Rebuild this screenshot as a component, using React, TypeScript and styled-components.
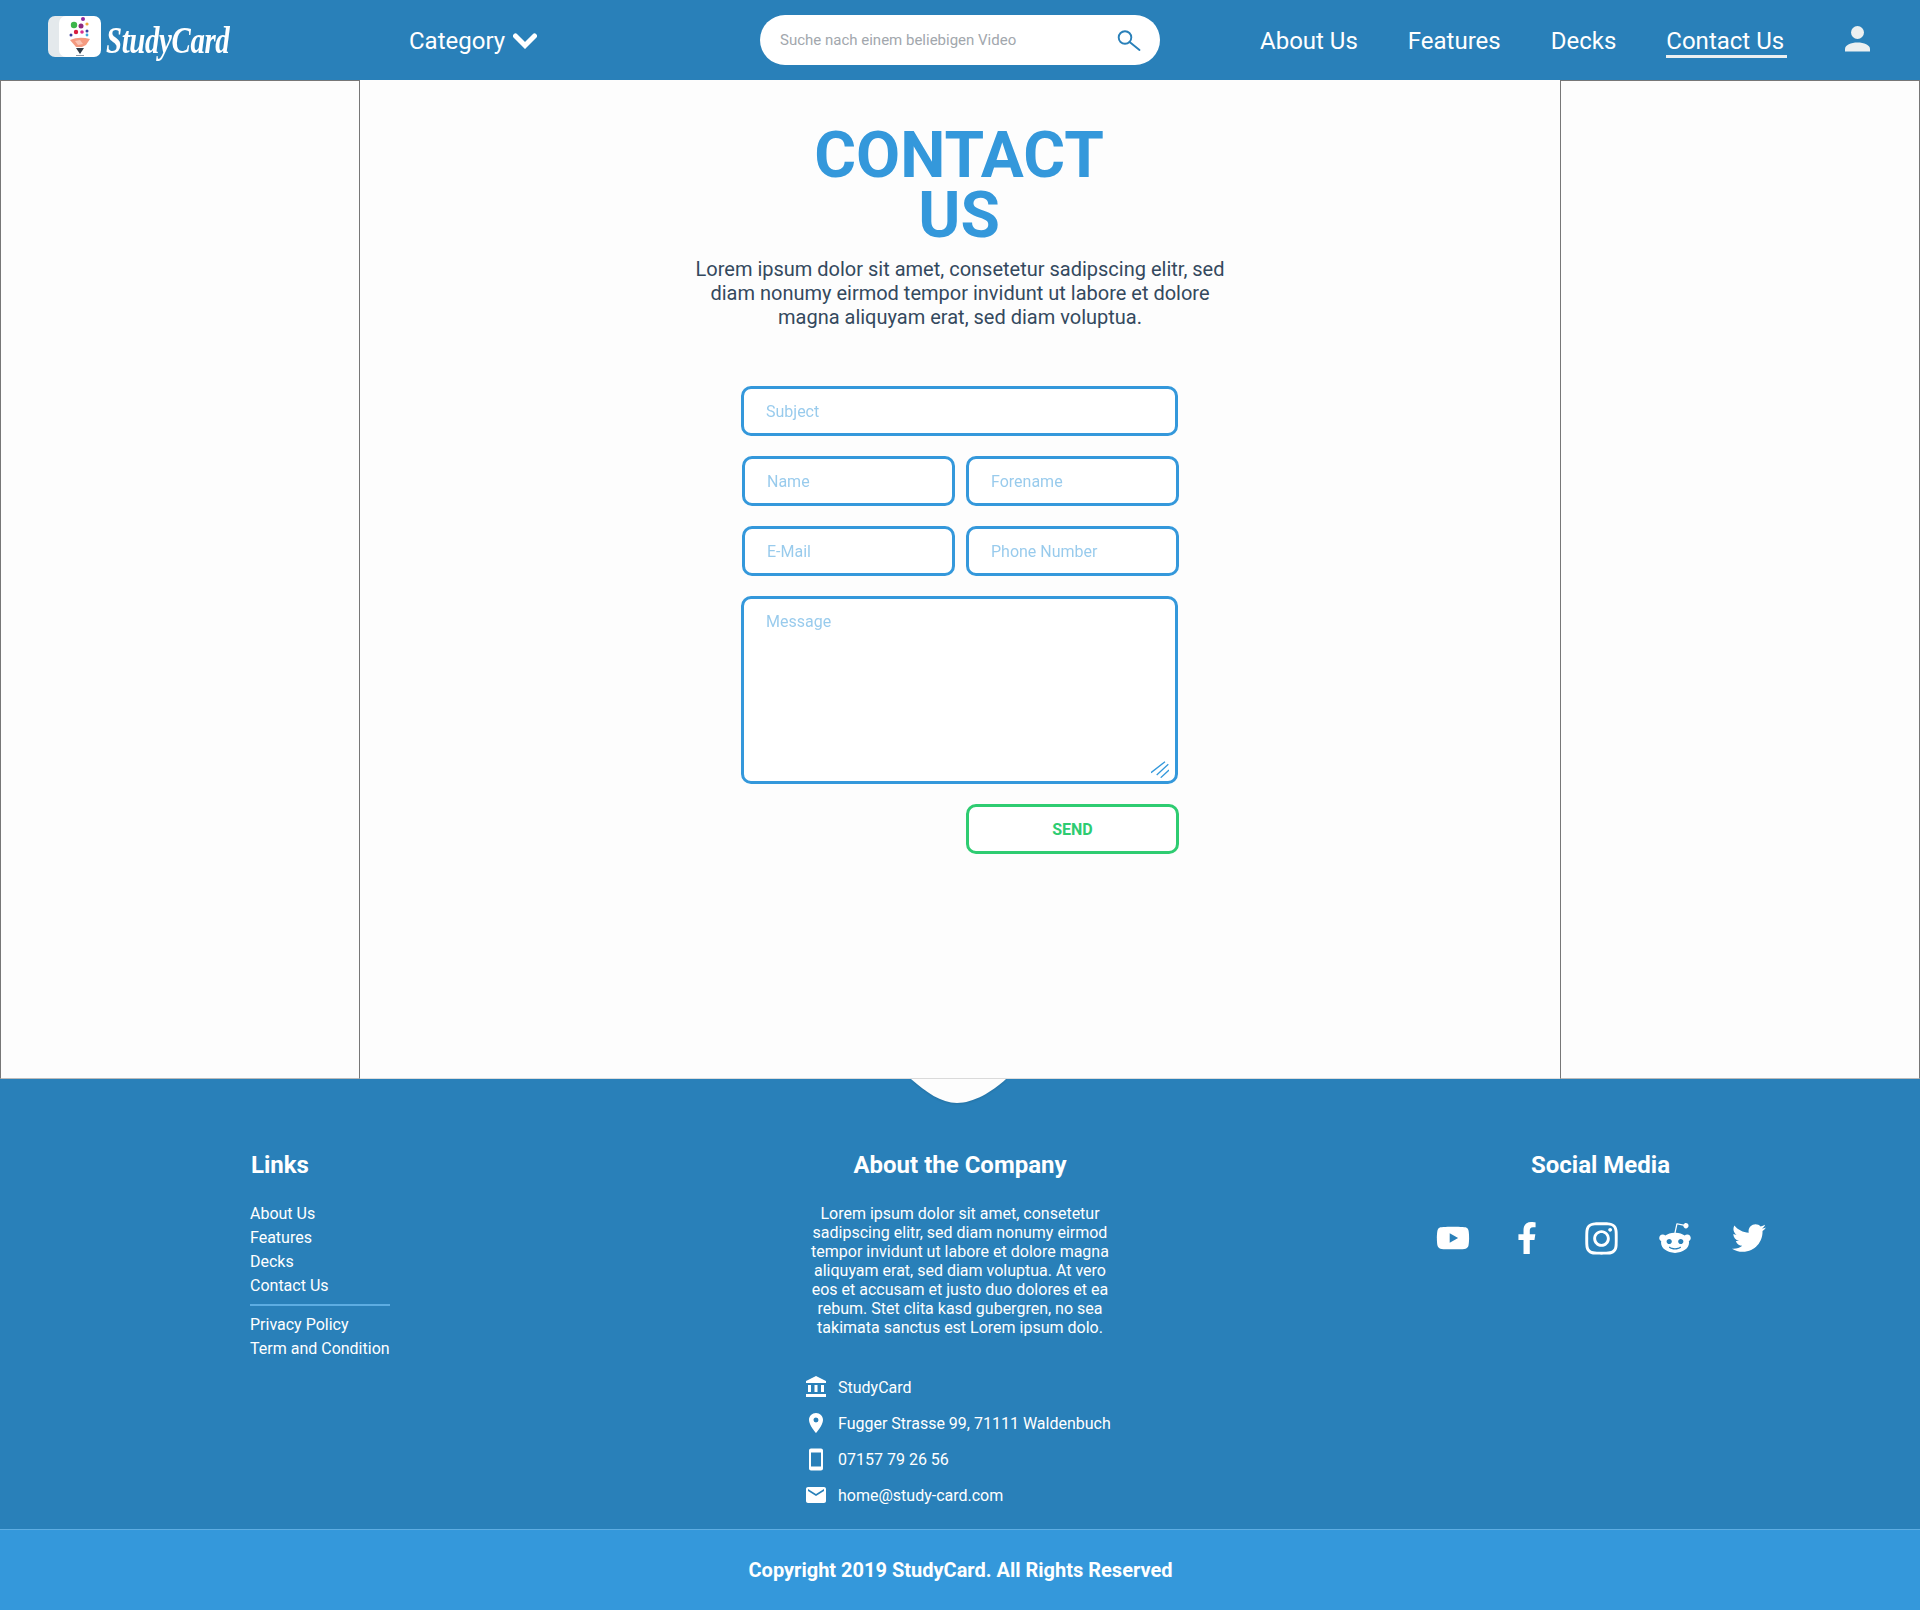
import React from 'react'
import styled, { createGlobalStyle } from 'styled-components'
import { FaFacebookF, FaInstagram, FaRedditAlien, FaTwitter, FaYoutube } from 'react-icons/fa'
import { MdAccountBalance, MdEmail, MdLocationOn, MdSmartphone } from 'react-icons/md'

const GlobalStyle = createGlobalStyle`
  * { box-sizing: border-box; }
  html, body { margin: 0; padding: 0; background: #fdfdfd; }
  body { font-family: Roboto, "Liberation Sans", sans-serif; }
`

const Page = styled.div`
  width: 1920px;
  height: 1610px;
  display: flex;
  flex-direction: column;
  overflow: hidden;
`

const Header = styled.header`
  height: 80px;
  flex: none;
  display: flex;
  align-items: center;
  background: #2980b9;
  color: #fff;
`

const LogoLink = styled.a`
  width: 361px;
  padding-left: 47px;
  display: flex;
  align-items: center;
  gap: 5px;
  flex: none;
`

const LogoMarkSvg = styled.svg`
  flex: none;
  margin-bottom: 6px;
`

const LogoText = styled.span`
  font-family: "Liberation Serif", serif;
  font-style: italic;
  font-weight: 700;
  font-size: 38px;
  letter-spacing: -0.5px;
  line-height: 46px;
  color: #fff;
  display: inline-block;
  transform: scaleX(0.76);
  transform-origin: left center;
`

const CategoryButton = styled.div`
  width: 399px;
  padding-left: 48px;
  padding-top: 2px;
  display: flex;
  align-items: center;
  gap: 8px;
  font-size: 24px;
  flex: none;
`

const SearchBox = styled.div`
  width: 400px;
  height: 50px;
  flex: none;
  background: #fff;
  border-radius: 25px;
  display: flex;
  align-items: center;
  padding: 0 19px 0 20px;
  color: #2980b9;
`

const SearchInput = styled.input`
  flex: 1;
  border: 0;
  outline: 0;
  background: none;
  padding: 0;
  font: 15px Roboto, sans-serif;
  &::placeholder { color: #a2a7ad; opacity: 1; }
`

const Nav = styled.nav`
  margin-left: 100px;
  display: flex;
  align-items: center;
  gap: 50px;
  font-size: 24px;
`

const NavLink = styled.a<{ $active?: boolean }>`
  display: block;
  line-height: 28px;
  padding: 2px ${(p) => (p.$active ? '3px' : '0')} ${(p) => (p.$active ? '0' : '3px')} 0;
  margin-top: 2px;
  border-bottom: ${(p) => (p.$active ? '3px solid #ecf0f1' : '0')};
  color: #fff;
`

const UserIcon = styled.div`
  margin-left: 58px;
  display: flex;
  color: #ecf0f1;
  margin-top: -2px;
`

const Main = styled.main`
  height: 999px;
  flex: none;
  display: grid;
  grid-template-columns: 360px 1200px 360px;
`

const SideColumn = styled.div`
  border: 1px solid #777;
  border-bottom-color: #bbb;
`

const Center = styled.section`
  display: flex;
  flex-direction: column;
  align-items: center;
  padding-top: 46px;
  border-bottom: 1px solid #ddd;
`

const Title = styled.h1`
  margin: 0 2px 0 0;
  width: 320px;
  text-align: center;
  font-size: 64px;
  line-height: 60px;
  font-weight: 700;
  color: #3498db;
`

const Lead = styled.p`
  margin: 11px 0 0;
  width: 540px;
  text-align: center;
  font-size: 20px;
  line-height: 24px;
  color: #34495e;
`

const Form = styled.form`
  margin-top: 57px;
  width: 440px;
  display: grid;
  grid-template-columns: 213px 213px;
  column-gap: 11px;
  row-gap: 20px;
  padding-left: 2px;
`

const Field = styled.input<{ $wide?: boolean }>`
  height: 50px;
  width: ${(p) => (p.$wide ? '437px' : '213px')};
  grid-column: ${(p) => (p.$wide ? '1 / 3' : 'auto')};
  margin-left: ${(p) => (p.$wide ? '-1px' : '0')};
  border: 3px solid #3498db;
  border-radius: 10px;
  padding: 0 22px;
  background: #fff;
  outline: 0;
  font: 16px Roboto, sans-serif;
  color: #2c3e50;
  &::placeholder { color: #3498db; opacity: 0.5; }
`

const MessageWrap = styled.div`
  grid-column: 1 / 3;
  position: relative;
  height: 188px;
  width: 437px;
  margin-left: -1px;
`

const MessageArea = styled.textarea`
  height: 100%;
  width: 100%;
  display: block;
  resize: none;
  border: 3px solid #3498db;
  border-radius: 10px;
  padding: 13px 22px;
  background: #fff;
  outline: 0;
  font: 16px Roboto, sans-serif;
  &::placeholder { color: #3498db; opacity: 0.5; }
`

const ResizeGrip = styled.svg`
  position: absolute;
  right: 9px;
  bottom: 6px;
`

const SendButton = styled.button`
  grid-column: 2;
  height: 50px;
  border: 3px solid #2ecc71;
  border-radius: 10px;
  background: #fff;
  color: #2ecc71;
  font: 700 16px Roboto, sans-serif;
  text-transform: uppercase;
`

const Footer = styled.footer`
  position: relative;
  height: 450px;
  flex: none;
  background: #2980b9;
  color: #fff;
  display: grid;
  grid-template-columns: 560px 300px 675px;
  padding: 71px 0 0 250px;
`

const Notch = styled.svg`
  position: absolute;
  left: 908px;
  top: 0;
  filter: drop-shadow(0 1px 1px rgba(0, 0, 0, 0.12));
`

const FooterColumn = styled.div<{ $center?: boolean }>`
  text-align: ${(p) => (p.$center ? 'center' : 'left')};
`

const FooterTitle = styled.h3<{ $center?: boolean }>`
  margin: 0 0 0 ${(p) => (p.$center ? '0' : '1px')};
  font-size: 24px;
  line-height: 30px;
  font-weight: 700;
  white-space: nowrap;
  text-align: ${(p) => (p.$center ? 'center' : 'left')};
`

const SocialTitle = styled(FooterTitle)`
  margin-left: -1px;
`

const LinkList = styled.ul`
  list-style: none;
  margin: 22px 0 0;
  padding: 0;
  width: 140px;
  font-size: 16px;
  line-height: 24px;
  white-space: nowrap;
`

const LinkDivider = styled.hr`
  margin: 6px 0 7px;
  width: 140px;
  height: 2px;
  border: 0;
  background: #5dade2;
`

const AboutText = styled.p`
  margin: 24px 0 0;
  font-size: 16px;
  line-height: 19px;
`

const ContactList = styled.div`
  margin-top: 38px;
  margin-left: -6px;
  display: flex;
  flex-direction: column;
  gap: 12px;
  white-space: nowrap;
`

const ContactRow = styled.div`
  display: flex;
  align-items: center;
  gap: 10px;
  height: 24px;
  font-size: 16px;
  text-align: left;
`

const ContactIcon = styled.span`
  width: 24px;
  display: flex;
  justify-content: center;
`

const SocialColumn = styled.div`
  padding-left: 306px;
  width: 676px;
`

const SocialRow = styled.div`
  margin-top: 39px;
  display: flex;
  justify-content: center;
`

const SocialIcon = styled.a`
  width: 74.5px;
  height: 38px;
  display: flex;
  align-items: center;
  justify-content: center;
  color: #fff;
`

const Copyright = styled.div`
  height: 81px;
  flex: none;
  background: #3498db;
  border-top: 1px solid #5dade2;
  color: #fff;
  font-size: 20px;
  font-weight: 700;
  padding-left: 1px;
  display: flex;
  align-items: center;
  justify-content: center;
`

function LogoMark() {
  return (
    <LogoMarkSvg width="54" height="42" viewBox="0 0 54 42">
      <rect x="1" y="0" width="44" height="41" rx="7" fill="#e4e9ec" />
      <rect x="12" y="0" width="42" height="41" rx="7" fill="#fff" />
      <circle cx="27" cy="9" r="3.2" fill="#3cb54a" />
      <circle cx="36" cy="3" r="2" fill="#8e2a9f" />
      <circle cx="34" cy="10" r="2.5" fill="#8e2a7f" />
      <circle cx="40" cy="8" r="1.6" fill="#f2a93b" />
      <circle cx="40" cy="15" r="1.5" fill="#3c3f9f" />
      <circle cx="29" cy="16" r="2.2" fill="#d81e3f" />
      <circle cx="35" cy="16" r="1.8" fill="#d8308f" />
      <circle cx="24" cy="19" r="1.5" fill="#3c3f9f" />
      <circle cx="40" cy="19" r="1.4" fill="#3aa8e0" />
      <path d="M23 24 Q32 20 43 23 L39 29 L35 31 L29 31 Z" fill="#f49a80" />
      <path d="M28 25 L33 24 L36 28 L31 29 Z" fill="#fbc4b4" />
      <path d="M29 32 H37 L33 38 Z" fill="#2f3b48" />
      <rect x="29" y="39" width="8" height="1" fill="#8b98a5" />
    </LogoMarkSvg>
  )
}

function ChevronIcon() {
  return (
    <svg width="24" height="16" viewBox="0 0 24 16">
      <path d="M2.5 3 L12 12.5 L21.5 3" fill="none" stroke="#fff" strokeWidth="5" strokeLinecap="round" strokeLinejoin="miter" />
    </svg>
  )
}

function SearchIcon() {
  return (
    <svg width="24" height="24" viewBox="0 0 24 24" fill="none" stroke="currentColor" strokeWidth="1.9" strokeLinecap="round">
      <circle cx="8" cy="9.5" r="6.3" />
      <path d="M12.6 14 L22.5 22" />
    </svg>
  )
}

function PersonIcon() {
  return (
    <svg width="25" height="26" viewBox="0 0 25 26" fill="currentColor">
      <circle cx="12.5" cy="6.5" r="6.5" />
      <path d="M0 25.5 V23 C0 19 6 16.5 12.5 16.5 S25 19 25 23 V25.5 Z" />
    </svg>
  )
}

export default function App() {
  return (
    <Page>
      <GlobalStyle />
      <Header>
        <LogoLink>
          <LogoMark />
          <LogoText>StudyCard</LogoText>
        </LogoLink>
        <CategoryButton>
          Category <ChevronIcon />
        </CategoryButton>
        <SearchBox>
          <SearchInput placeholder="Suche nach einem beliebigen Video" />
          <SearchIcon />
        </SearchBox>
        <Nav>
          <NavLink>About Us</NavLink>
          <NavLink>Features</NavLink>
          <NavLink>Decks</NavLink>
          <NavLink $active>Contact Us</NavLink>
        </Nav>
        <UserIcon>
          <PersonIcon />
        </UserIcon>
      </Header>
      <Main>
        <SideColumn />
        <Center>
          <Title>CONTACT US</Title>
          <Lead>
            Lorem ipsum dolor sit amet, consetetur sadipscing elitr, sed diam nonumy eirmod tempor invidunt ut labore et
            dolore magna aliquyam erat, sed diam voluptua.
          </Lead>
          <Form>
            <Field $wide placeholder="Subject" />
            <Field placeholder="Name" />
            <Field placeholder="Forename" />
            <Field placeholder="E-Mail" />
            <Field placeholder="Phone Number" />
            <MessageWrap>
              <MessageArea placeholder="Message" />
              <ResizeGrip width="18" height="17" viewBox="0 0 18 17">
                <path d="M0 11.7 L14 .7 M5.7 14 L17.3 3.3 M9.7 16.7 L18 9" stroke="#3498db" strokeWidth="1.3" fill="none" />
              </ResizeGrip>
            </MessageWrap>
            <SendButton type="button">Send</SendButton>
          </Form>
        </Center>
        <SideColumn />
      </Main>
      <Footer>
        <Notch width="102" height="27" viewBox="0 0 102 27">
          <path d="M3 0 C18 13 33 24 49 24 C65 24 84 13 98 0 Z" fill="#fdfdfd" />
        </Notch>
        <FooterColumn>
          <FooterTitle>Links</FooterTitle>
          <LinkList>
            <li>About Us</li>
            <li>Features</li>
            <li>Decks</li>
            <li>Contact Us</li>
            <LinkDivider />
            <li>Privacy Policy</li>
            <li>Term and Condition</li>
          </LinkList>
        </FooterColumn>
        <FooterColumn $center>
          <FooterTitle $center>About the Company</FooterTitle>
          <AboutText>
            Lorem ipsum dolor sit amet, consetetur sadipscing elitr, sed diam nonumy eirmod tempor invidunt ut labore et
            dolore magna aliquyam erat, sed diam voluptua. At vero eos et accusam et justo duo dolores et ea rebum. Stet
            clita kasd gubergren, no sea takimata sanctus est Lorem ipsum dolo.
          </AboutText>
          <ContactList>
            <ContactRow>
              <ContactIcon>
                <MdAccountBalance size={24} />
              </ContactIcon>
              StudyCard
            </ContactRow>
            <ContactRow>
              <ContactIcon>
                <MdLocationOn size={24} />
              </ContactIcon>
              Fugger Strasse 99, 71111 Waldenbuch
            </ContactRow>
            <ContactRow>
              <ContactIcon>
                <MdSmartphone size={27} />
              </ContactIcon>
              07157 79 26 56
            </ContactRow>
            <ContactRow>
              <ContactIcon>
                <MdEmail size={24} />
              </ContactIcon>
              home@study-card.com
            </ContactRow>
          </ContactList>
        </FooterColumn>
        <SocialColumn>
          <SocialTitle $center>Social Media</SocialTitle>
          <SocialRow>
            <SocialIcon>
              <FaYoutube size={34} />
            </SocialIcon>
            <SocialIcon>
              <FaFacebookF size={32} />
            </SocialIcon>
            <SocialIcon>
              <FaInstagram size={37} />
            </SocialIcon>
            <SocialIcon>
              <FaRedditAlien size={34} />
            </SocialIcon>
            <SocialIcon>
              <FaTwitter size={34} />
            </SocialIcon>
          </SocialRow>
        </SocialColumn>
      </Footer>
      <Copyright>Copyright 2019 StudyCard. All Rights Reserved</Copyright>
    </Page>
  )
}
